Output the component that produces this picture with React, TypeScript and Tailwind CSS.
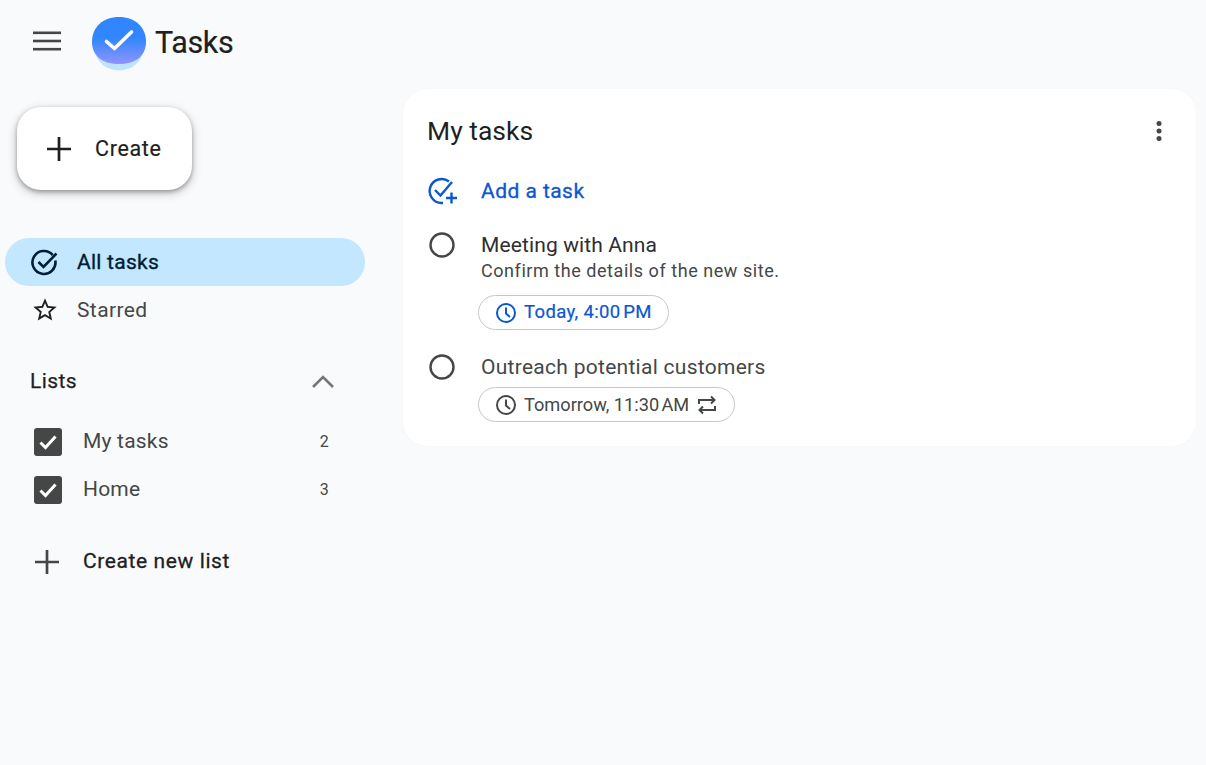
function Check() {
  return (
    <span className="flex h-[28px] w-[28px] items-center justify-center rounded-[3px] bg-[#444746]">
      <svg width="20" height="20" viewBox="0 0 20 20" fill="none"><path d="M2.5 10.5L7.5 15.5L17.5 4.5" stroke="#fff" strokeWidth="3" /></svg>
    </span>
  );
}
function Circle() {
  return <svg width="28" height="28" viewBox="0 0 28 28" fill="none"><circle cx="14" cy="14" r="11.5" stroke="#444746" strokeWidth="2.4" /></svg>;
}
function Clock({ color }: { color: string }) {
  return (
    <svg width="22" height="22" viewBox="0 0 22 22" fill="none" stroke={color} strokeWidth="2">
      <circle cx="11" cy="11" r="9" />
      <path d="M11 5.5V11.5L15 15" />
    </svg>
  );
}
export default function App() {
  return (
    <div className="flex min-h-[765px] w-[1206px] overflow-hidden bg-[#f9fafc] text-[#1f1f1f] [font-family:Roboto,'Liberation_Sans',sans-serif]">
      <aside className="flex w-[403px] shrink-0 flex-col">
        <header className="flex h-[85px] items-center pl-[33px]">
          <svg width="28" height="22" viewBox="0 0 28 22" fill="#444746" className="mt-[-4px]"><rect y="1.5" width="28" height="2.6" /><rect y="9.7" width="28" height="2.6" /><rect y="17.9" width="28" height="2.6" /></svg>
          <svg width="56" height="56" viewBox="0 0 56 56" className="ml-[30px] mt-[2px]">
            <defs>
              <linearGradient id="g" x1="0" y1="0" x2="0" y2="1">
                <stop offset="0.45" stopColor="#3186ff" />
                <stop offset="1" stopColor="#9194ff" />
              </linearGradient>
            </defs>
            <ellipse cx="28" cy="33" rx="24" ry="21.5" fill="#bfe3fd" />
            <path d="M28 1C44 1 55 11 55 26C55 41 43 48 28 48C13 48 1 41 1 26C1 11 12 1 28 1Z" fill="url(#g)" />
            <path d="M15.5 25.5L23.5 32.5L40.5 16" fill="none" stroke="#fff" strokeWidth="3.6" strokeLinecap="round" strokeLinejoin="round" />
          </svg>
          <span className="ml-[8px] text-[30.5px] leading-[40px] tracking-[-0.35px] text-[#1f1f1f] [-webkit-text-stroke:0.2px_#1f1f1f]">Tasks</span>
        </header>
        <div className="pl-[17px] pt-[22px]">
          <button className="flex h-[83px] w-[175px] items-center rounded-[24px] bg-white pl-[28px] text-[21.5px] text-[#1f1f1f] shadow-[0_2px_4px_rgba(0,0,0,0.3),0_3px_8px_2px_rgba(0,0,0,0.15)]">
            <svg width="28" height="28" viewBox="0 0 28 28" fill="none" stroke="#1f1f1f" strokeWidth="2.7"><path d="M14 2V26M2 14H26" /></svg>
            <span className="ml-[22px] mt-[1px] tracking-[0.65px] [-webkit-text-stroke:0.2px_#1f1f1f]">Create</span>
          </button>
        </div>
        <nav className="mt-[48px] flex flex-col pl-[5px]">
          <div className="flex h-[48px] w-[360px] items-center rounded-full bg-[#c2e7ff] pl-[26px] text-[21px] tracking-[0.25px] text-[#001d35] [-webkit-text-stroke:0.35px_#001d35]">
            <svg width="28" height="28" viewBox="0 0 28 28" fill="none" stroke="#001d35" strokeWidth="2.6"><path d="M21.8 7.1A11.5 11.5 0 1 0 24.3 12.5" /><path d="M7.5 14L12.5 19L25.5 5.5" /></svg>
            <span className="ml-[18px] mt-[1px]">All tasks</span>
          </div>
          <div className="flex h-[48px] w-[360px] items-center pl-[26px] text-[21px] tracking-[0.4px] text-[#444746]">
            <svg width="28" height="28" viewBox="0 0 24 24" fill="#1f1f1f"><path d="M22 9.24l-7.19-.62L12 2 9.19 8.63 2 9.24l5.46 4.73L5.82 21 12 17.27 18.18 21l-1.63-7.03L22 9.24zM12 15.4l-3.76 2.27 1-4.28-3.32-2.88 4.38-.38L12 6.1l1.71 4.04 4.38.38-3.32 2.88 1 4.28L12 15.4z" /></svg>
            <span className="ml-[18px] mt-[1px]">Starred</span>
          </div>
        </nav>
        <div className="mt-[24px] flex h-[48px] w-[335px] items-center justify-between pl-[30px] text-[21px] tracking-[0.4px] text-[#1f1f1f] [-webkit-text-stroke:0.25px_#1f1f1f]">
          <span>Lists</span>
          <svg width="22" height="13" viewBox="0 0 22 13" fill="none" stroke="#757575" strokeWidth="2.6" className="mr-[1px] mt-[-2px]"><path d="M1 12L11 2L21 12" /></svg>
        </div>
        <div className="mt-[12px] flex flex-col">
          {[['My tasks', '2'], ['Home', '3']].map(([name, n]) => (
            <div key={name} className="flex h-[48px] w-[335px] items-center pl-[34px] pr-[6px] text-[21px] tracking-[0.2px] text-[#444746]">
              <Check />
              <span className="ml-[21px] flex-1">{name}</span>
              <span className="text-[16px]">{n}</span>
            </div>
          ))}
        </div>
        <div className="mt-[24px] flex h-[48px] items-center pl-[34px] text-[21px] tracking-[0.6px] text-[#1f1f1f] [-webkit-text-stroke:0.3px_#1f1f1f]">
          <svg width="26" height="26" viewBox="0 0 26 26" fill="none" stroke="#444746" strokeWidth="2.7"><path d="M13 1V25M1 13H25" /></svg>
          <span className="ml-[23px]">Create new list</span>
        </div>
      </aside>
      <main className="flex-1 pr-[10px] pt-[89px]">
        <section className="h-[357px] rounded-[24px] bg-white pl-[24px] pr-[33px] shadow-[0_0_1px_rgba(0,0,0,0.08)]">
          <div className="flex h-[84px] items-center justify-between">
            <h1 className="text-[26.5px] font-normal text-[#1f1f1f]">My tasks</h1>
            <svg width="8" height="22" viewBox="0 0 8 22" fill="#444746"><circle cx="4" cy="3.5" r="2.5" /><circle cx="4" cy="11" r="2.5" /><circle cx="4" cy="18.5" r="2.5" /></svg>
          </div>
          <div className="flex h-[36px] items-center text-[21px] tracking-[0.45px] text-[#0b57d0] [-webkit-text-stroke:0.3px_#0b57d0]">
            <svg width="30" height="28" viewBox="0 0 30 28" fill="none" stroke="#0b57d0" strokeWidth="2.4"><path d="M22 4.5A12 12 0 1 0 14.5 26H16" /><path d="M8 13L13.5 18.5L25 5" /><path d="M24.5 15.5V26.5M19 21H30" /></svg>
            <span className="ml-[24px] mt-[1px]">Add a task</span>
          </div>
          <div className="mt-[22px] flex">
            <div className="w-[54px] shrink-0 pl-[1px]"><Circle /></div>
            <div className="flex flex-col">
              <span className="text-[21px] leading-[28px] tracking-[0.12px] text-[#2e2e2e]">Meeting with Anna</span>
              <span className="text-[18px] leading-[24px] tracking-[0.55px] text-[#444746]">Confirm the details of the new site.</span>
              <span className="ml-[-3px] mt-[12px] flex h-[35px] w-[191px] items-center rounded-full border border-[#c7c7c7] pl-[16px] text-[18.5px] text-[#0b57d0]">
                <Clock color="#0b57d0" />
                <span className="ml-[7px] tracking-[0.35px] [-webkit-text-stroke:0.2px_#0b57d0]">{'Today, 4:00\u202fPM'}</span>
              </span>
            </div>
          </div>
          <div className="mt-[23px] flex">
            <div className="w-[54px] shrink-0 pl-[1px]"><Circle /></div>
            <div className="flex flex-col">
              <span className="text-[21px] leading-[28px] tracking-[0.28px] text-[#444746]">Outreach potential customers</span>
              <span className="ml-[-3px] mt-[6px] flex h-[35px] w-[257px] items-center rounded-full border border-[#c7c7c7] pl-[16px] text-[18.2px] text-[#444746]">
                <Clock color="#444746" />
                <span className="ml-[7px]">{'Tomorrow, 11:30\u202fAM'}</span>
                <svg width="20" height="20" viewBox="0 0 20 20" fill="none" stroke="#444746" strokeWidth="2" className="ml-[8px]"><path d="M2 9V5H17M14 1.5L17.5 5L14 8.5M18 11V15H3M6 11.5L2.5 15L6 18.5" /></svg>
              </span>
            </div>
          </div>
        </section>
      </main>
    </div>
  );
}
